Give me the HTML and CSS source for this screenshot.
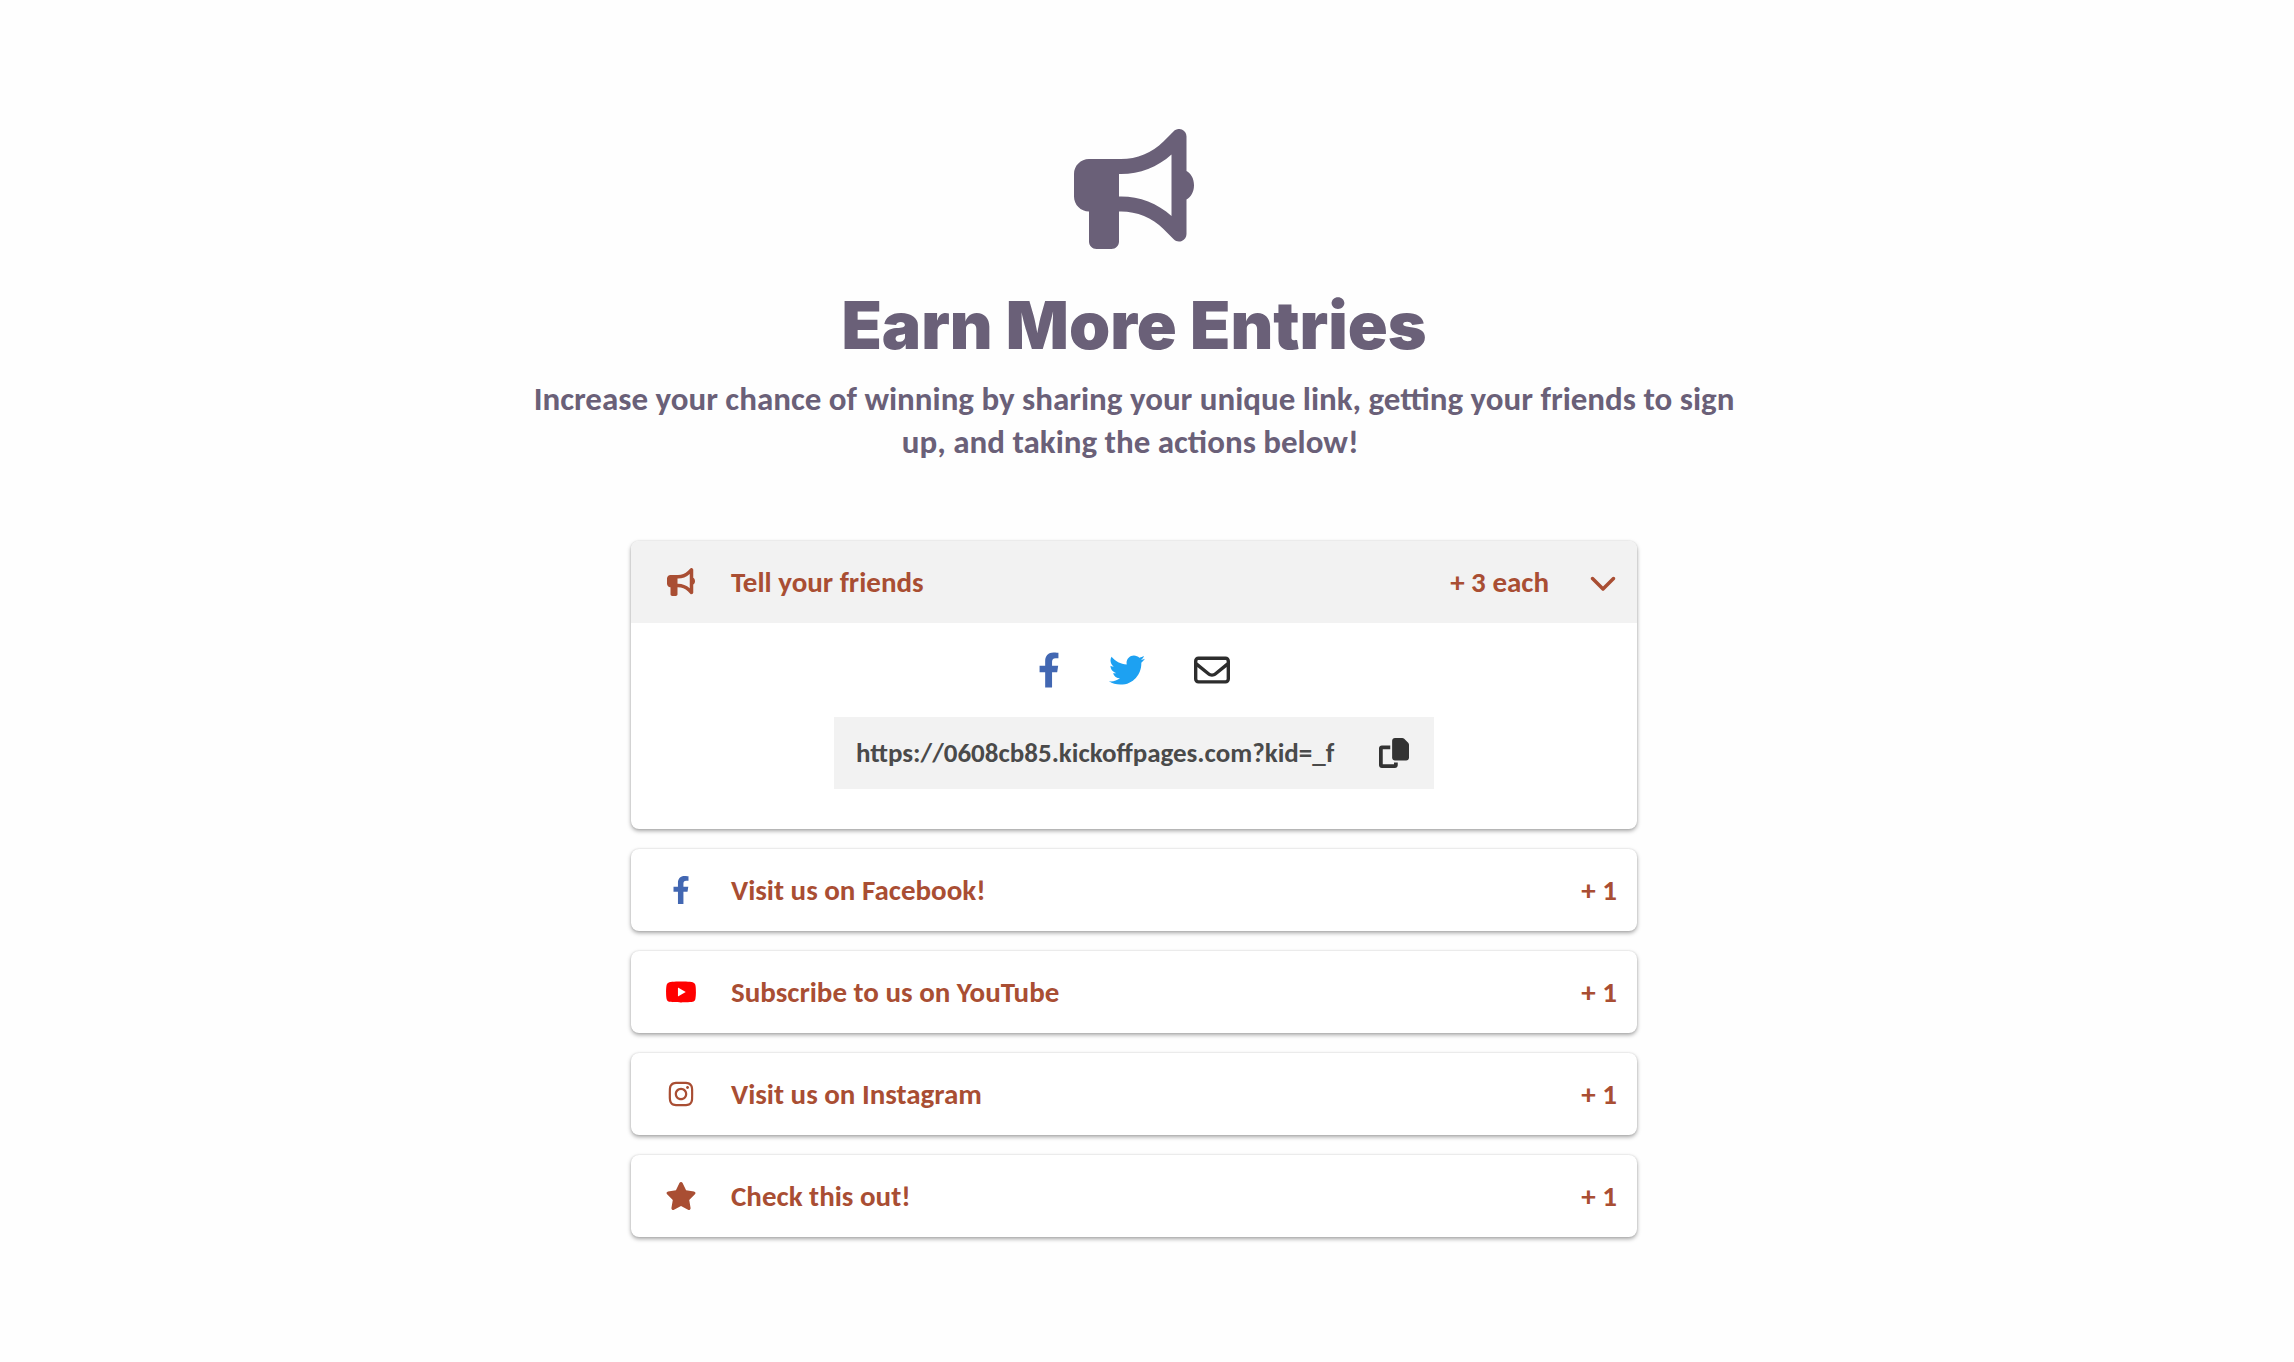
FILE: index.html
```html
<!DOCTYPE html>
<html lang="en">
<head>
<meta charset="utf-8">
<meta name="viewport" content="width=device-width, initial-scale=1">
<title>Earn More Entries</title>
<link rel="stylesheet" href="styles.css">
</head>
<body>
<svg class="sprite" aria-hidden="true">
  <symbol id="bullhorn" viewBox="0 0 512 512"><path d="M480 32c0-12.900-7.800-24.600-19.800-29.600s-25.700-2.200-34.900 6.900L381.700 53c-48 48-113.100 75-181 75H64c-35.300 0-64 28.700-64 64v96c0 35.300 28.700 64 64 64v128c0 17.700 14.300 32 32 32h64c17.700 0 32-14.300 32-32V352h8.700c67.900 0 133 27 181 75l43.600 43.600c9.200 9.200 22.900 11.900 34.900 6.900s19.800-16.600 19.800-29.600V300.400c18.600-8.800 32-32.500 32-60.400s-13.400-51.600-32-60.400V32zm-64 76.700V371.300C357.200 317.800 280.500 288 200.700 288H192V192h8.700c79.800 0 156.500-29.800 215.300-83.300z"/></symbol>
  <symbol id="facebook" viewBox="0 0 320 512"><path d="M279.140 288l14.220-92.660h-88.910v-60.130c0-25.350 12.420-50.060 52.240-50.060h40.420V6.260S260.430 0 225.360 0c-73.220 0-121.080 44.380-121.080 124.720v70.620H22.890V288h81.390v224h100.170V288z"/></symbol>
  <symbol id="twitter" viewBox="0 0 512 512"><path d="M459.370 151.716c.325 4.548.325 9.097.325 13.645 0 138.720-105.583 298.558-298.558 298.558-59.452 0-114.680-17.219-161.137-47.106 8.447.974 16.568 1.299 25.340 1.299 49.055 0 94.213-16.568 130.274-44.832-46.132-.975-84.792-31.188-98.112-72.772 6.498.974 12.995 1.624 19.818 1.624 9.421 0 18.843-1.300 27.614-3.573-48.081-9.747-84.143-51.980-84.143-102.985v-1.299c13.969 7.797 30.214 12.670 47.431 13.319-28.264-18.843-46.781-51.005-46.781-87.391 0-19.492 5.197-37.360 14.294-52.954 51.655 63.675 129.300 105.258 216.365 109.807-1.624-7.797-2.599-15.918-2.599-24.040 0-57.828 46.782-104.934 104.934-104.934 30.213 0 57.502 12.670 76.670 33.137 23.715-4.548 46.456-13.320 66.599-25.340-7.798 24.366-24.366 44.833-46.132 57.827 21.117-2.273 41.584-8.122 60.426-16.243-14.292 20.791-32.161 39.308-52.628 54.253z"/></symbol>
  <symbol id="envelope" viewBox="0 0 512 512"><path d="M64 112c-8.800 0-16 7.200-16 16v22.100L220.500 291.700c20.700 17 50.400 17 71.100 0L464 150.100V128c0-8.800-7.200-16-16-16H64zM48 212.200V384c0 8.800 7.200 16 16 16H448c8.800 0 16-7.200 16-16V212.200L322 328.800c-38.400 31.500-93.700 31.500-132 0L48 212.200zM0 128C0 92.700 28.700 64 64 64H448c35.300 0 64 28.700 64 64V384c0 35.300-28.700 64-64 64H64c-35.300 0-64-28.700-64-64V128z"/></symbol>
  <symbol id="copy" viewBox="0 0 512 512"><path d="M272 0H396.100c12.700 0 24.900 5.100 33.900 14.100l67.900 67.900c9 9 14.100 21.200 14.100 33.900V336c0 26.500-21.500 48-48 48H272c-26.500 0-48-21.500-48-48V48c0-26.500 21.500-48 48-48zM48 128H192v64H64V448H256V416h64v48c0 26.500-21.500 48-48 48H48c-26.500 0-48-21.500-48-48V176c0-26.500 21.500-48 48-48z"/></symbol>
  <symbol id="chevron" viewBox="0 0 512 512"><path d="M233.400 406.600c12.500 12.500 32.800 12.500 45.300 0l192-192c12.500-12.500 12.500-32.800 0-45.300s-32.800-12.500-45.300 0L256 338.700 86.600 169.400c-12.500-12.500-32.800-12.500-45.300 0s-12.500 32.800 0 45.300l192 192z"/></symbol>
  <symbol id="youtube" viewBox="0 0 576 512"><path d="M549.655 124.083c-6.281-23.650-24.787-42.276-48.284-48.597C458.781 64 288 64 288 64S117.220 64 74.629 75.486c-23.497 6.322-42.003 24.947-48.284 48.597-11.412 42.867-11.412 132.305-11.412 132.305s0 89.438 11.412 132.305c6.281 23.650 24.787 41.500 48.284 47.821C117.220 448 288 448 288 448s170.780 0 213.371-11.486c23.497-6.321 42.003-24.171 48.284-47.821 11.412-42.867 11.412-132.305 11.412-132.305s0-89.438-11.412-132.305zm-317.510 213.508V175.185l142.739 81.205-142.739 81.201z"/></symbol>
  <symbol id="instagram" viewBox="0 0 448 512"><path d="M224.100 141c-63.600 0-114.900 51.300-114.900 114.900s51.300 114.900 114.900 114.900S339 319.500 339 255.900 287.700 141 224.100 141zm0 189.600c-41.100 0-74.700-33.500-74.700-74.700s33.500-74.700 74.700-74.700 74.700 33.500 74.700 74.700-33.600 74.700-74.700 74.700zm146.400-194.300c0 14.900-12 26.800-26.800 26.800-14.900 0-26.800-12-26.800-26.800s12-26.800 26.800-26.800 26.800 12 26.800 26.800zm76.100 27.200c-1.700-35.900-9.900-67.700-36.200-93.900-26.200-26.200-58-34.400-93.900-36.200-37-2.100-147.900-2.100-184.900 0-35.800 1.700-67.600 9.900-93.900 36.100s-34.400 58-36.200 93.900c-2.100 37-2.100 147.900 0 184.900 1.700 35.900 9.900 67.700 36.200 93.900s58 34.400 93.900 36.200c37 2.100 147.900 2.100 184.900 0 35.900-1.700 67.700-9.900 93.900-36.200 26.200-26.200 34.400-58 36.200-93.900 2.100-37 2.100-147.800 0-184.800zM398.800 388c-7.800 19.600-22.900 34.700-42.600 42.600-29.500 11.700-99.500 9-132.100 9s-102.700 2.600-132.100-9c-19.600-7.800-34.700-22.900-42.600-42.600-11.700-29.500-9-99.500-9-132.100s-2.600-102.700 9-132.100c7.800-19.600 22.900-34.700 42.600-42.600 29.500-11.700 99.500-9 132.100-9s102.700-2.600 132.100 9c19.600 7.800 34.700 22.900 42.600 42.600 11.700 29.500 9 99.500 9 132.100s2.700 102.700-9 132.100z"/></symbol>
  <symbol id="star" viewBox="0 0 576 512"><path d="M316.900 18C311.600 7 300.400 0 288.100 0s-23.400 7-28.800 18L195 150.300 51.400 171.500c-12 1.800-22 10.200-25.700 21.700s-.7 24.200 7.900 32.700L137.800 329 113.200 474.700c-2 12 3 24.200 12.900 31.300s23 8 33.800 2.300l128.300-68.500 128.300 68.500c10.800 5.700 23.900 4.900 33.800-2.300s14.900-19.300 12.900-31.300L438.500 329 542.700 225.900c8.600-8.500 11.700-21.200 7.900-32.700s-13.700-19.900-25.700-21.700L381.200 150.300 316.900 18z"/></symbol>
</svg>

<main class="page">
  <header class="intro">
    <svg class="intro-icon" aria-hidden="true"><use href="#bullhorn"/></svg>
    <h1>Earn More Entries</h1>
    <p>Increase your chance of winning by sharing your unique link, getting your friends to sign up, and taking the actions below!&nbsp;</p>
  </header>

  <section class="actions" aria-label="Ways to earn entries">
    <article class="card">
      <button class="row row-open" type="button" aria-expanded="true">
        <svg class="icon" aria-hidden="true"><use href="#bullhorn"/></svg>
        <span class="label">Tell your friends</span>
        <span class="points">+ 3 each</span>
        <svg class="chevron" aria-hidden="true"><use href="#chevron"/></svg>
      </button>
      <div class="panel">
        <nav class="share" aria-label="Share">
          <a class="facebook" href="#" aria-label="Share on Facebook"><svg class="share-facebook"><use href="#facebook"/></svg></a>
          <a class="twitter" href="#" aria-label="Share on Twitter"><svg class="share-icon"><use href="#twitter"/></svg></a>
          <a class="email" href="#" aria-label="Share by email"><svg class="share-icon"><use href="#envelope"/></svg></a>
        </nav>
        <div class="link-box">
          <input type="text" readonly aria-label="Your unique link" value="https://0608cb85.kickoffpages.com?kid=_f">
          <button class="copy" type="button" aria-label="Copy link"><svg><use href="#copy"/></svg></button>
        </div>
      </div>
    </article>
    <a class="card row" href="#">
      <svg class="icon facebook" aria-hidden="true"><use href="#facebook"/></svg>
      <span class="label">Visit us on Facebook!</span>
      <span class="points">+ 1</span>
    </a>
    <a class="card row" href="#">
      <svg class="icon youtube" aria-hidden="true"><use href="#youtube"/></svg>
      <span class="label">Subscribe to us on YouTube</span>
      <span class="points">+ 1</span>
    </a>
    <a class="card row" href="#">
      <svg class="icon" aria-hidden="true"><use href="#instagram"/></svg>
      <span class="label">Visit us on Instagram</span>
      <span class="points">+ 1</span>
    </a>
    <a class="card row" href="#">
      <svg class="icon" aria-hidden="true"><use href="#star"/></svg>
      <span class="label">Check this out!</span>
      <span class="points">+ 1</span>
    </a>
  </section>
</main>
</body>
</html>
```
FILE: styles.css
```css
* {
  box-sizing: border-box;
}

body {
  margin: 0;
  padding-right: 26px;
  background: #fefefe;
  color: #a94e33;
  font-family: Carlito, Lato, "Noto Sans", sans-serif;
  font-weight: 700;
}

svg {
  display: block;
  fill: currentColor;
}

.sprite {
  display: none;
}

.page {
  display: flex;
  flex-direction: column;
  align-items: center;
  gap: 77px;
  padding: 129px 24px 124px;
}

.intro {
  display: flex;
  flex-direction: column;
  align-items: center;
  width: 100%;
  max-width: 1240px;
  color: #6a6078;
  text-align: center;
}

.intro-icon {
  width: 120px;
  height: 120px;
}

h1 {
  margin: 36px 0 13px;
  font-family: Inter, "Open Sans", sans-serif;
  font-size: 66px;
  font-weight: 900;
  line-height: 80px;
}

.intro p {
  margin: 0;
  font-size: 33px;
  line-height: 43px;
}

.actions {
  display: flex;
  flex-direction: column;
  gap: 20px;
  width: 100%;
  max-width: 1006px;
}

.card {
  border-radius: 8px;
  background: #fff;
  box-shadow: 0 2px 4px rgba(0, 0, 0, 0.35), 0 0 2px rgba(0, 0, 0, 0.12);
  overflow: hidden;
}

.row {
  display: flex;
  align-items: center;
  width: 100%;
  min-height: 82px;
  padding: 0 20px 0 34px;
  border: 0;
  color: #a94e33;
  font: inherit;
  font-size: 29px;
  line-height: 40px;
  text-align: left;
  text-decoration: none;
}

.row-open {
  background: #f2f2f2;
}

.icon {
  flex: none;
  width: 32px;
  height: 28px;
  margin-right: 34px;
}

.label {
  flex: 1;
}

.chevron {
  width: 28px;
  height: 28px;
  margin-left: 40px;
}

.facebook {
  color: #4267b2;
}

.twitter {
  color: #1da1f2;
}

.youtube {
  color: #f00;
}

.email {
  color: #2d2d2d;
}

.panel {
  display: flex;
  flex-direction: column;
  align-items: center;
  gap: 29px;
  padding: 29px 24px 40px;
}

.share {
  display: flex;
  align-items: center;
  gap: 49px;
}

.share-icon {
  width: 36px;
  height: 36px;
}

.share-facebook {
  width: 22px;
  height: 36px;
}

.link-box {
  display: flex;
  align-items: center;
  width: 100%;
  max-width: 600px;
  height: 72px;
  padding: 0 25px 0 22px;
  background: #f2f2f2;
}

.link-box input {
  flex: 1;
  min-width: 0;
  padding: 0;
  border: 0;
  background: none;
  color: #4a4a4a;
  font: inherit;
  font-size: 27px;
  line-height: 40px;
}

.copy {
  padding: 0;
  border: 0;
  background: none;
  color: #333;
}

.copy svg {
  width: 30px;
  height: 30px;
}
```
